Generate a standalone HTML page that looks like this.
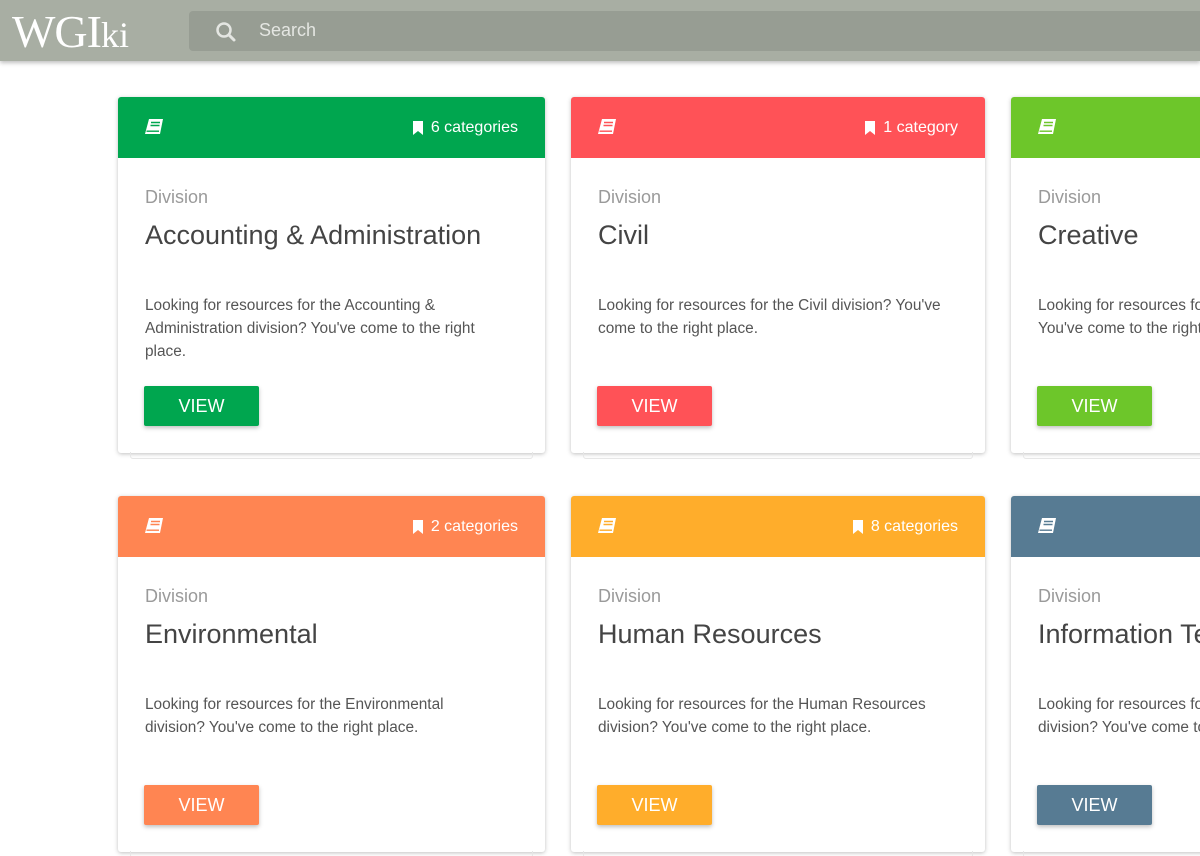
<!DOCTYPE html>
<html><head><meta charset="utf-8"><style>
*{box-sizing:border-box;margin:0;padding:0}
html,body{width:1200px;height:856px;overflow:hidden}
body{background:#fff;font-family:"Liberation Sans",sans-serif;position:relative}
.wrap{position:absolute;left:0;top:0;width:1200px;height:856px;overflow:hidden}
.top{position:absolute;left:0;top:0;width:1200px;height:61px;background:#a8aea3;box-shadow:0 2px 4px rgba(0,0,0,.25);z-index:5}
.logo{position:absolute;left:12px;top:5px;font-family:"Liberation Serif",serif;color:#fff;font-size:46px;letter-spacing:-1px}
.logo small{font-size:36px;letter-spacing:0}
.search{position:absolute;left:189px;top:11px;width:1011px;height:40px;background:#979d93;border-radius:4px 0 0 4px}
.search span{position:absolute;left:70px;top:9px;color:#e4e6e2;font-size:18px}
.search svg{position:absolute;left:26px;top:10px}
.card{position:absolute;width:427px;height:356px;background:#fff;border-radius:3px;box-shadow:0 1px 4px rgba(0,0,0,.25)}
.card::after{content:"";position:absolute;left:12px;right:12px;bottom:-6px;height:6px;border:1px solid #e6e6e6;border-top:none;border-radius:0 0 3px 3px}
.hd{height:61px;border-radius:3px 3px 0 0;position:relative;color:#fff}
.hd .bk{position:absolute;left:26px;top:21px}
.hd .cat{position:absolute;right:27px;top:22px;font-size:16px;display:flex;align-items:center;gap:7px}
.dv{position:absolute;left:27px;top:90px;color:#9a9a9a;font-size:18px}
.tt{position:absolute;left:27px;top:123px;color:#444;font-size:27px;white-space:nowrap}
.ds{position:absolute;left:27px;top:197px;width:360px;color:#555;font-size:15.4px;line-height:23px}
.bt{position:absolute;left:26px;top:289px;width:115px;height:40px;border-radius:2px;color:#fff;font-size:18px;text-align:center;line-height:40px;box-shadow:0 2px 4px rgba(0,0,0,.25)}
</style></head><body><div class="wrap">
<div class="top"><div class="logo">WGI<small>ki</small></div>
<div class="search"><svg width="22" height="22" viewBox="0 0 22 22"><circle cx="9" cy="9" r="6.5" fill="none" stroke="#e4e6e2" stroke-width="2.5"/><path d="M14 14l5 5" stroke="#e4e6e2" stroke-width="3" stroke-linecap="round"/></svg><span>Search</span></div></div>

<svg width="0" height="0" style="position:absolute"><defs>
<symbol id="book" viewBox="0 0 20 18"><path d="M5 1h14l-3 15H1z" fill="#fff"/><path d="M7 4.5h9M6.5 7.5h9" stroke="currentColor" stroke-width="1.4"/><path d="M2.5 13.2h12.5" stroke="currentColor" stroke-width="1.4"/></symbol>
<symbol id="bm" viewBox="0 0 12 14"><path d="M1 0h10v14L6 10 1 14z" fill="#fff"/></symbol>
</defs></svg>

<div class="card" style="left:118px;top:97px"><div class="hd" style="background:#00a64f;color:#00a64f"><svg class="bk" width="20" height="18"><use href="#book"/></svg><div class="cat" style="color:#fff"><svg width="12" height="14"><use href="#bm"/></svg>6 categories</div></div>
<div class="dv">Division</div><div class="tt">Accounting &amp; Administration</div><div class="ds">Looking for resources for the Accounting &amp; Administration division? You've come to the right place.</div><div class="bt" style="background:#00a64f">VIEW</div></div>

<div class="card" style="left:571px;top:97px;width:414px"><div class="hd" style="background:#ff5257;color:#ff5257"><svg class="bk" width="20" height="18"><use href="#book"/></svg><div class="cat" style="color:#fff"><svg width="12" height="14"><use href="#bm"/></svg>1 category</div></div>
<div class="dv">Division</div><div class="tt">Civil</div><div class="ds">Looking for resources for the Civil division? You've come to the right place.</div><div class="bt" style="background:#ff5257">VIEW</div></div>

<div class="card" style="left:1011px;top:97px;width:414px"><div class="hd" style="background:#6dc62a;color:#6dc62a"><svg class="bk" width="20" height="18"><use href="#book"/></svg></div>
<div class="dv">Division</div><div class="tt">Creative</div><div class="ds">Looking for resources for the Creative division? You've come to the right place.</div><div class="bt" style="background:#6dc62a">VIEW</div></div>

<div class="card" style="left:118px;top:496px"><div class="hd" style="background:#ff8552;color:#ff8552"><svg class="bk" width="20" height="18"><use href="#book"/></svg><div class="cat" style="color:#fff"><svg width="12" height="14"><use href="#bm"/></svg>2 categories</div></div>
<div class="dv">Division</div><div class="tt">Environmental</div><div class="ds">Looking for resources for the Environmental division? You've come to the right place.</div><div class="bt" style="background:#ff8552">VIEW</div></div>

<div class="card" style="left:571px;top:496px;width:414px"><div class="hd" style="background:#ffad2b;color:#ffad2b"><svg class="bk" width="20" height="18"><use href="#book"/></svg><div class="cat" style="color:#fff"><svg width="12" height="14"><use href="#bm"/></svg>8 categories</div></div>
<div class="dv">Division</div><div class="tt">Human Resources</div><div class="ds">Looking for resources for the Human Resources division? You've come to the right place.</div><div class="bt" style="background:#ffad2b">VIEW</div></div>

<div class="card" style="left:1011px;top:496px;width:414px"><div class="hd" style="background:#577b93;color:#577b93"><svg class="bk" width="20" height="18"><use href="#book"/></svg></div>
<div class="dv">Division</div><div class="tt">Information Technology</div><div class="ds">Looking for resources for the Information Technology division? You've come to the right place.</div><div class="bt" style="background:#577b93">VIEW</div></div>
</div></body></html>
